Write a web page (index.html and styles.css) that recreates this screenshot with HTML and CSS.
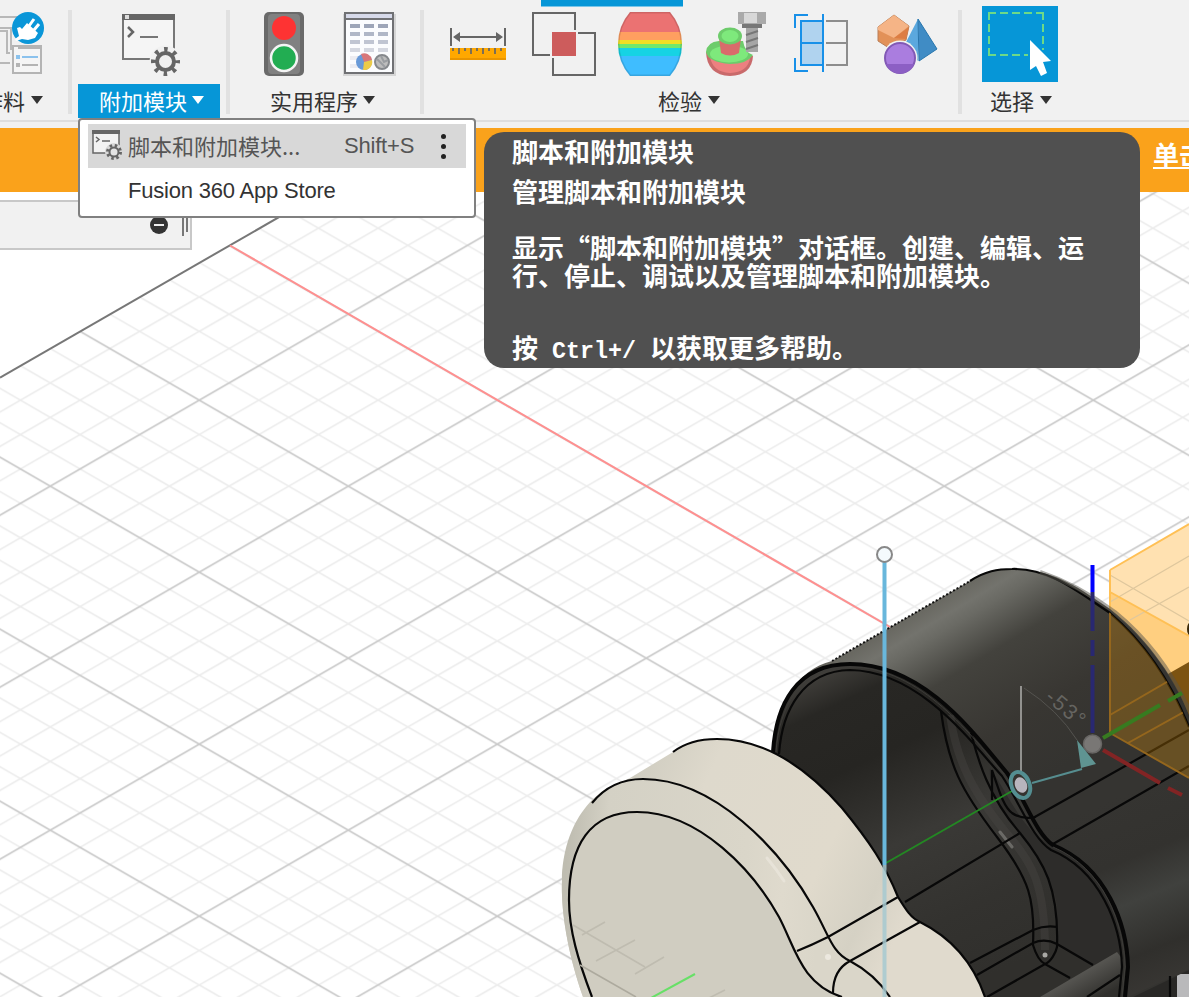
FILE: index.html
```html
<!DOCTYPE html>
<html lang="zh-CN">
<head>
<meta charset="utf-8">
<title>Fusion 360</title>
<link rel="stylesheet" href="styles.css">
</head>
<body>
<div class="app">
<svg class="canvas" width="1189" height="997" viewBox="0 0 1189 997">
  <defs>
    <pattern id="grid" width="298" height="172" patternUnits="userSpaceOnUse" x="199.3" y="400.2">
      <path class="minor" d="M0-137.6 298 34.4M0-103.2 298 68.8M0-68.8 298 103.2M0-34.4 298 137.6M0 34.4 298 206.4M0 68.8 298 240.8M0 103.2 298 275.2M0 137.6 298 309.6M0 34.4 298-137.6M0 68.8 298-103.2M0 103.2 298-68.8M0 137.6 298-34.4M0 206.4 298 34.4M0 240.8 298 68.8M0 275.2 298 103.2M0 309.6 298 137.6"/>
      <path class="major" d="M-2-1.15 300 173.15M-2 173.15 300-1.15"/>
    </pattern>
    <linearGradient id="barrel" gradientUnits="userSpaceOnUse" x1="900" y1="618" x2="1010" y2="800">
      <stop offset="0" stop-color="#66655e"/><stop offset=".1" stop-color="#73736d"/><stop offset=".16" stop-color="#6a6a64"/><stop offset=".36" stop-color="#43423d"/><stop offset=".7" stop-color="#383632"/><stop offset="1" stop-color="#343330"/>
    </linearGradient>
    <linearGradient id="lower" gradientUnits="userSpaceOnUse" x1="1110" y1="800" x2="1189" y2="990">
      <stop offset="0" stop-color="#353431"/><stop offset=".3" stop-color="#33322f"/><stop offset=".5" stop-color="#40413e"/><stop offset=".75" stop-color="#302f2c"/><stop offset="1" stop-color="#3b3936"/>
    </linearGradient>
    <linearGradient id="inside" gradientUnits="userSpaceOnUse" x1="810" y1="670" x2="960" y2="990">
      <stop offset="0" stop-color="#45433f"/><stop offset=".12" stop-color="#282724"/><stop offset=".3" stop-color="#262522"/><stop offset=".55" stop-color="#3a3936"/><stop offset=".8" stop-color="#33322f"/><stop offset="1" stop-color="#302f2c"/>
    </linearGradient>
    <linearGradient id="cream" gradientUnits="userSpaceOnUse" x1="600" y1="790" x2="900" y2="930">
      <stop offset="0" stop-color="#cbc9bd"/><stop offset=".28" stop-color="#ded9cc"/><stop offset=".7" stop-color="#e0dacc"/><stop offset=".88" stop-color="#d5d1c4"/><stop offset="1" stop-color="#e0dacd"/>
    </linearGradient>
    <linearGradient id="bevel" gradientUnits="userSpaceOnUse" x1="565" y1="880" x2="820" y2="900">
      <stop offset="0" stop-color="#bfbdb1"/><stop offset=".15" stop-color="#d4d1c5"/><stop offset=".7" stop-color="#dad6c9"/><stop offset=".85" stop-color="#dfdacd"/><stop offset="1" stop-color="#dad6c9"/>
    </linearGradient>
    <linearGradient id="shine" gradientUnits="userSpaceOnUse" x1="1075" y1="972" x2="1092" y2="1002">
      <stop offset="0" stop-color="#5b5a56"/><stop offset="1" stop-color="#302f2c"/>
    </linearGradient>
    <clipPath id="body"><path d="M1012 569C1047 566 1074 589 1110 613 1145 643 1171 682 1189 727V790H1000Z"/></clipPath>
  </defs>

  <!-- construction plane -->
  <path fill="url(#grid)" d="M0 377.600 340 182H1189V997H0Z"/>
  <path class="edge" d="M0 377.600 340 182"/>
  <path class="xaxis" d="M230 245.500 890 627"/>

  <!-- selected component -->
  <path fill="#ffe1b1" d="M1110 570 1189 524V770L1110 730Z"/>
  <path fill="#ffcf80" d="M1110 592 1189 636V700H1110Z"/>
  <path class="grid-over" d="M1110 575 1189 621M1110 602 1189 556M1130 620 1189 587"/>
  <path class="orange-line" d="M1110 570 1189 524M1110 570V620M1110 592 1189 636"/>
  <path fill="#7c5312" d="M1168 674 1189 662V720H1178Z"/>
  <ellipse cx="1191" cy="629" rx="4" ry="7" fill="#3a2808"/>

  <!-- dark body -->
  <path fill="#292826" d="M1100 970H1189V997H1100Z"/>
  <path fill="#b9b9bb" d="M1177 974H1189V997H1177Z"/>
  <path fill="url(#barrel)" d="M773 752C776 705 796 670 832 661L970 581C985 571 998 569 1012 569 1055 569 1080 589 1110 609 1150 640 1177 683 1189 715V970L1133 997H773Z"/>
  <path fill="url(#lower)" d="M1033 818 1189 731V969L1128 997 1128 967C1124 915 1099 863 1053 845Z"/>
  <path class="dotted" d="M832 661 970 581"/>
  <path class="ink" d="M970 581C985 571 998 569 1012 569 1050 568 1078 592 1110 613 1145 643 1171 682 1189 727"/>
  <path class="soft-rim" d="M1040 572C1070 582 1092 595 1115 612 1152 642 1176 680 1190 712"/>
  <path fill="url(#inside)" d="M773 752C776 705 796 664 850 664 925 664 975 735 1007 773 1025 799 1036 834 1053 845 1107 867 1127 925 1128 967L1125 997H773Z"/>
  <path fill="#2d2c2a" d="M990 768C1010 797 1025 836 1053 845 1100 865 1120 920 1122 950L1092 966 1057 945V905C1053 880 1038 855 1020 833 1000 810 988 790 990 768Z"/>
  <path fill="url(#shine)" d="M1040 997 1117 952 1123 960V997Z"/>
  <path class="channel" d="M950 715C957 764 975 795 1008 835 1032 862 1045 885 1045 950"/>
  <path class="gleam" d="M1000 832 1012 847"/>
  <circle cx="1045" cy="955" r="2.500" fill="#aaa9a5"/>
  <path class="ink" d="M941 711C948 765 961 790 997 837 1030 880 1035 900 1033 945 1036 955 1041 962 1045 964 1051 962 1056 952 1057 947 1059 888 1044 862 1020 833 985 793 976 751 971 733M992 800V770C999 790 1003 806 1012 813Q1022 820 1036 817M905 902 1020 833M970 963 1033 930Q1045 925 1057 927M977 975 1033 943Q1045 938 1057 944L1093 965M987 997 1045 964 1070 978M1087 997 1120 975M1033 818 1189 730M1053 844 1189 766"/>
  <path class="rim" d="M773 752C776 705 796 664 850 664 925 664 975 735 1007 773 1025 799 1036 834 1053 845 1107 867 1127 925 1128 967L1125 997"/>
  <path class="ink" d="M779 754C782 710 803 671 850 670 920 671 971 742 1002 776 1020 803 1032 838 1051 850 1100 870 1121 925 1122 967L1119 997"/>
  <path class="rim-light" d="M776 752C779 708 799 667 850 667 922 667 973 738 1004 774M1053 847C1104 868 1124 925 1125 967L1122 997"/>
  <path class="ink" d="M1170 976V997"/>

  <!-- selection overlay on the dark body -->
  <g clip-path="url(#body)">
    <path fill="#ffa500" fill-opacity=".25" d="M1110 560H1189V778L1110 733Z"/>
    <path class="orange-dim" d="M1110 715 1189 669M1128 743 1189 709M1110 733 1189 778"/>
    <path class="orange-dim" d="M1110 590V733"/>
  </g>

  <!-- cream body -->
  <path fill="url(#cream)" d="M583 997C565 945 561 905 562 880 565 830 585 798 630 778L673 752C686 742 701 739 717 739 775 739 820 783 842 808 870 842 885 865 898 897 906 910 911 918 920 922 952 938 973 962 985 997Z"/>
  <path fill="url(#bevel)" d="M583 997C565 945 561 905 562 880 563 825 594 779 643 779 714 779 780 849 813 907 829 935 832 953 850 961 867 970 880 982 890 997Z"/>
  <path fill="#d0cdc1" d="M592 997C578 960 569 930 569 900 569 845 590 812 637 812 700 812 754 872 779 917 795 947 801 984 842 997Z"/>
  <path class="highlight" d="M767 858Q777 870 784 881"/>
  <circle cx="828" cy="957" r="3" fill="#ece8df"/>
  <path class="ink" d="M673 752C686 742 701 739 717 739 775 739 820 783 842 808 870 842 885 865 898 897 906 910 911 918 920 922 952 938 973 962 985 997M592 803C605 787 622 779 643 779 714 779 780 849 813 907 829 935 832 953 850 961 867 970 880 982 890 997M592 997C578 960 569 930 569 900 569 845 590 812 637 812 700 812 754 872 779 917 795 947 801 984 842 997M797 951Q812 945 828 937L898 897M920 922 850 961Q833 970 833 993"/>
  <path class="faint" d="M582 935 605 922M596 961 635 940M635 974 664 957M705 1000 725 990M573 925 645 967"/>
  <path class="faint strong" d="M580 965 636 997"/>
  <path class="green-tip" d="M651 998 695 974"/>

  <!-- manipulators -->
  <path class="green-axis" d="M886 863 1012 791"/>
  <path class="blue-line" d="M884.500 562V865"/>
  <path class="blue-faint" d="M884.500 865V997"/>
  <circle cx="884.500" cy="554.500" r="7.500" fill="#f4fafd" stroke="#888" stroke-width="2"/>
  <path class="z-top" d="M1092.500 565V592"/>
  <path class="z-low" d="M1092.500 592V631M1092.500 640V656M1092.500 665V733"/>
  <path class="y-low" d="M1103 738 1160 705M1168 701 1182 693"/>
  <path class="x-low" d="M1103 750 1160 783M1168 788 1182 795"/>
  <circle cx="1092.500" cy="744" r="9" fill="#797775" stroke="#686664" stroke-width="1.500"/>
  <path d="M1021 686V771" stroke="#b0b0ae" stroke-width="1.500"/>
  <path d="M1024 688Q1058 710 1077 740" fill="none" stroke="#54534f"/>
  <path d="M1032 783 1082 769" stroke="#568d8f" stroke-width="2"/>
  <path fill="#5f9492" d="M1077 740 1096 764 1081 768Z"/>
  <ellipse cx="1020.500" cy="785" rx="9" ry="13.500" transform="rotate(-22 1020.500 785)" fill="#35332f" stroke="#548e91" stroke-width="4"/>
  <ellipse cx="1021" cy="785" rx="6" ry="8" transform="rotate(-22 1021 785)" fill="#b8b5bd"/>
  <text class="angle" transform="translate(1044 699) rotate(40)">-53°</text>
</svg>

<header class="toolbar">
  <section class="group g-make">
    <div class="icons">
      <svg width="64" height="64" viewBox="0 12 64 64">
        <path fill="none" stroke="#b8b8b8" stroke-width="2" d="M0 17H18M0 28H11V50M0 31H7V53H10M0 63H10"/>
        <path fill="#f5f5f5" stroke="#b4b4b4" stroke-width="2" d="M13 46H41V73H13Z"/><path stroke="#b4b4b4" stroke-width="4" d="M18 47H41"/>
        <path stroke="#8bc2ed" stroke-width="2" d="M22 57H38"/><path stroke="#b4b4b4" stroke-width="2" d="M22 65H38"/><path fill="#8bc2ed" d="M16 55h4v4h-4z"/><path fill="#b4b4b4" d="M16 63h4v4h-4z"/>
        <circle cx="28" cy="28" r="16" fill="#0a96d8"/>
        <path fill="#fff" d="M17 28 20 27 22 29 27 23 38 33 35 38 28 40 22 39 16 41 15 39 19 36Z"/>
        <path fill="none" stroke="#fff" stroke-width="3" d="M29 26 34 19M34 30 39 24"/>
      </svg>
    </div>
    <div class="label"><span>作料</span><i class="tri"></i></div>
  </section>
  <section class="group g-addins">
    <div class="icons">
      <svg width="64" height="64" viewBox="118 12 64 64">
        <path fill="#f5f5f5" stroke="#777" stroke-width="2" d="M123 15H174V59H123Z"/>
        <path fill="#666" d="M122 14H175V20H122Z"/><path fill="#ddd" d="M125 15h4v4h-4z"/>
        <path fill="none" stroke="#666" stroke-width="2.500" d="M128 27 133 32 128 37"/><path stroke="#777" stroke-width="2" d="M140 37H158"/>
        <circle cx="165.500" cy="61.500" r="16" fill="#f1f1f1"/>
        <circle cx="165.500" cy="61.500" r="12" fill="none" stroke="#666" stroke-width="5" stroke-dasharray="3.500 5.925" stroke-dashoffset="1.750"/>
        <circle cx="165.500" cy="61.500" r="8.500" fill="#f1f1f1" stroke="#666" stroke-width="4"/>
      </svg>
    </div>
    <div class="label active"><span>附加模块</span><i class="tri"></i></div>
  </section>
  <section class="group g-utils">
    <div class="icons">
      <svg width="64" height="64" viewBox="252 12 64 64">
        <rect x="264" y="12" width="40" height="64" rx="5" fill="#6a6a6a"/><rect x="268" y="14" width="32" height="60" rx="4" fill="#818181"/>
        <circle cx="284" cy="28" r="12" fill="#fe3333"/><circle cx="284" cy="58" r="13" fill="#22ad52" stroke="#f4f4f4" stroke-width="2.500"/>
      </svg>
      <svg width="64" height="64" viewBox="338 12 64 64">
        <path fill="#d5d5d5" d="M343 14H396V76H343Z"/><path fill="#fbfcfe" stroke="#707174" stroke-width="2" d="M345 13H393V73H345Z"/>
        <path fill="#d7daea" d="M346 14H392V18H346Z"/><path stroke="#707174" stroke-width="2" d="M345 19H393"/>
        <g stroke-width="4" stroke-dasharray="10 4"><path stroke="#9da5b8" d="M350 26H388"/><path stroke="#b0b7c7" d="M350 34H388"/><path stroke="#c0c5d2" d="M350 42H388"/><path stroke="#d4d7e0" d="M350 50H388"/><path stroke="#ececf1" d="M350 58H360M350 66H360"/></g>
        <circle cx="364" cy="62" r="8" fill="#699ad8"/><path fill="#d8777a" d="M364 62 361 54A8 8 0 0 1 372 60Z"/><path fill="#eccb48" d="M364 62 372 60A8 8 0 0 1 363 70Z"/>
        <circle cx="382" cy="62" r="7" fill="#bdbdbd" stroke="#85888c" stroke-width="2"/><path fill="none" stroke="#9a9da1" stroke-width="2" d="M377 59 385 67M381 56 384 62 388 60"/>
      </svg>
    </div>
    <div class="label"><span>实用程序</span><i class="tri"></i></div>
  </section>
  <section class="group g-inspect">
    <div class="icons">
      <svg width="64" height="64" viewBox="446 12 64 64">
        <path fill="none" stroke="#666" stroke-width="2" d="M451 28V46M505 28V46M456 37H500"/><path fill="#666" d="M453 37 460 32V42ZM503 37 496 32V42Z"/>
        <path fill="#ffa800" d="M450 48H506V60H450Z"/><path fill="#e99500" d="M450 58H506V60H450Z"/><path stroke="#666" stroke-width="1.700" d="M453 48V51M459 48V54M465 48V51M471 48V54M477 48V51M483 48V54M489 48V51M495 48V54M501 48V51"/>
      </svg>
      <svg width="64" height="64" viewBox="532 12 64 64">
        <path fill="none" stroke="#666" stroke-width="2" d="M575 30V13H533V55H550M578 33H595V75H553V58"/><path fill="#cd5c5c" d="M552 32H576V56H552Z"/>
      </svg>
      <svg width="64" height="64" viewBox="618 12 64 64">
        <defs><clipPath id="zebra"><path d="M630 12H670Q682 26 682 44T670 76H630Q618 62 618 44T630 12Z"/></clipPath></defs>
        <g clip-path="url(#zebra)"><path fill="#eb7272" d="M618 12h64v20h-64z"/><path fill="#ff9f60" d="M618 32h64v8h-64z"/><path fill="#f0df24" d="M618 40h64v4h-64z"/><path fill="#70e86d" d="M618 44h64v4h-64z"/><path fill="#16d3e4" d="M618 48h64v8h-64z"/><path fill="#3fbdff" d="M618 56h64v20h-64z"/><path fill="none" stroke="#000" stroke-opacity=".12" stroke-width="3" d="M630 12H670Q682 26 682 44T670 76H630Q618 62 618 44T630 12Z"/></g>
      </svg>
      <svg width="64" height="64" viewBox="704 12 64 64">
        <path fill="#c96a6b" d="M706 52Q707 75 730 76 752 75 753 56Z"/><path fill="#ed8080" d="M710 56Q712 72 730 73 748 72 750 58Z"/>
        <path fill="#6dcc6b" d="M706 52Q707 42 719 41H743Q745 53 753 55 747 64 730 64 708 62 706 52Z"/><ellipse cx="729" cy="54" rx="19" ry="8.500" fill="#7ee97c"/>
        <path fill="#d96b6b" d="M719 38H741L739 53Q730 58 721 53Z"/><ellipse cx="730" cy="36" rx="12" ry="8.500" fill="#6dcc6b"/><ellipse cx="730" cy="36" rx="8.500" ry="6" fill="#7ee97c"/>
        <path fill="#aaa" d="M738 12H766V24H738Z"/><path fill="#d8d8d8" d="M744 13H757V23H744Z"/><path fill="#777" d="M742 24H762V28H742Z"/><path fill="#a6a6a6" d="M746 28H758V52H746Z"/><path stroke="#777" stroke-width="2" d="M746 35 758 31M746 42 758 38M746 49 758 45"/>
      </svg>
      <svg width="64" height="64" viewBox="790 12 64 64">
        <path fill="#b0d3ef" d="M801 21H822V65H801Z"/><path fill="none" stroke="#1890e8" stroke-width="2" d="M795 28V15H808M795 58V71H808M823 14V72M823 21H801V65H823M801 43H823"/><path fill="none" stroke="#8d8d8d" stroke-width="2" d="M826 21H847V65H826M826 43H847"/>
      </svg>
      <svg width="64" height="64" viewBox="876 12 64 64">
        <path fill="#e29158" stroke="#b97f58" d="M894 15 909 26 906 40 889 48 878 41V27Z"/><path fill="#f5b486" d="M894 15 909 26 894 38 878 30V27Z"/><path fill="#dd7d43" d="M909 27 894 38 906 39Z"/>
        <path fill="#5ba8de" d="M918 19V61L904 46Z"/><path fill="#408cc5" stroke="#2876ad" d="M918 19 937 49 919 61Z"/>
        <circle cx="900" cy="58" r="17.500" fill="#f1f1f1"/><circle cx="900" cy="58" r="15" fill="#aa7ddf" stroke="#8259b5" stroke-width="2"/><path fill="#8c5fc4" d="M886 64H914A15 15 0 0 1 886 64Z"/>
      </svg>
    </div>
    <div class="label"><span>检验</span><i class="tri"></i></div>
  </section>
  <section class="group g-select">
    <div class="icons">
      <svg class="pick" width="76" height="76" viewBox="982 6 76 76">
        <path fill="#0696d7" d="M982 6H1058V82H982Z"/>
        <path fill="none" stroke="#6dd987" stroke-width="2" stroke-dasharray="8 4" d="M1000 13H1037M1043 24V50M989 24V50M1000 55H1028"/>
        <path fill="none" stroke="#6dd987" stroke-width="2" d="M996 13H989V20M1037 13H1043V20M989 49V55H996"/>
        <path fill="#fff" d="M1030 40 1051 61 1043 62 1047 73 1041 76 1036 66 1030 70Z"/>
      </svg>
    </div>
    <div class="label"><span>选择</span><i class="tri"></i></div>
  </section>
  <div class="tab-mark"></div>
</header>

<div class="banner"><a class="link">单击</a></div>
<div class="browser"><svg width="40" height="26" viewBox="148 215 40 26"><circle cx="159" cy="225" r="9" fill="#333"/><path stroke="#eee" stroke-width="2" d="M154 225H164"/><path stroke="#777" stroke-width="2" d="M183 215V236M187 215V232"/></svg></div>

<nav class="menu">
  <div class="item hot">
    <svg width="32" height="32" viewBox="90 130 32 32">
      <path fill="#f2f2f2" stroke="#666" stroke-width="1.500" d="M93 132H119V153H93Z"/><path fill="#666" d="M92 130H120V134H92Z"/><path fill="none" stroke="#666" stroke-width="1.500" d="M96 137 99 139.500 96 142M102 141H110"/>
      <circle cx="114" cy="152" r="9" fill="#d8d8d8"/><circle cx="114" cy="152" r="6.500" fill="none" stroke="#666" stroke-width="3" stroke-dasharray="2.500 2.605"/><circle cx="114" cy="152" r="4.500" fill="#e4e4e4" stroke="#666" stroke-width="2"/>
    </svg>
    <span class="name">脚本和附加模块...</span><span class="key">Shift+S</span><span class="dots"><i></i><i></i><i></i></span>
  </div>
  <div class="item"><span class="store">Fusion 360 App Store</span></div>
</nav>

<aside class="tooltip">
  <p>脚本和附加模块</p>
  <p class="sub">管理脚本和附加模块</p>
  <p class="text">显示“脚本和附加模块”对话框。创建、编辑、运<br>行、停止、调试以及管理脚本和附加模块。</p>
  <p class="help">按<span class="mono"> Ctrl+/ </span>以获取更多帮助。</p>
</aside>
</div>
</body>
</html>
```
FILE: styles.css
```css
* { box-sizing: border-box; }
body { margin: 0; background: #fff; font-family: "Liberation Sans", "Noto Sans CJK SC", sans-serif; color: #333; }
.app { position: relative; width: 1189px; height: 997px; overflow: hidden; }
.canvas { position: absolute; left: 0; top: 0; }

.minor { fill: none; stroke: #ececec; stroke-width: 1.6; }
.major { fill: none; stroke: #cacaca; stroke-width: 1.7; }
.edge { stroke: #777; stroke-width: 2; }
.xaxis { stroke: #ff8f8f; stroke-width: 2; }
.grid-over { fill: none; stroke: #dfc79d; stroke-width: 1.3; }
.orange-line { fill: none; stroke: #ffc055; stroke-width: 2; }
.orange-dim { fill: none; stroke: #94661d; stroke-width: 2; }
.ink { fill: none; stroke: #080808; stroke-width: 2.2; }
.dotted { fill: none; stroke: #111; stroke-width: 2; stroke-dasharray: 2 2; }
.soft-rim { fill: none; stroke: #55534b; stroke-width: 4; opacity: .5; }
.rim { fill: none; stroke: #070707; stroke-width: 4; }
.rim-light { fill: none; stroke: #3d3c39; stroke-width: 1; }
.channel { fill: none; stroke: #484744; stroke-width: 8; opacity: .4; }
.gleam { stroke: #8d8c88; stroke-width: 3; opacity: .6; stroke-linecap: round; }
.highlight { fill: none; stroke: #ebe7dd; stroke-width: 3; stroke-linecap: round; opacity: .7; }
.faint { fill: none; stroke: #bfbcb0; stroke-width: 1.6; }
.strong { stroke: #adaa9e; }
.green-tip { stroke: #67e067; stroke-width: 2; }
.green-axis { stroke: #238823; stroke-width: 2; }
.blue-line { stroke: #69b7dc; stroke-width: 4; }
.blue-faint { stroke: #a7cad1; stroke-width: 4; opacity: .85; }
.z-top { stroke: #00f; stroke-width: 4; }
.z-low { stroke: #292871; stroke-width: 4; }
.y-low { fill: none; stroke: #377b20; stroke-width: 4; }
.x-low { fill: none; stroke: #822424; stroke-width: 4; }
.angle { font: 21px "Liberation Sans", sans-serif; letter-spacing: 2px; fill: #666561; }

.toolbar { position: relative; display: flex; height: 128px; background: #f1f1f1; border-bottom: 6px solid #f1f1f1; box-shadow: inset 0 -2px #dedede; }
.group { position: relative; flex: none; height: 118px; }
.group:not(.g-select)::after { content: ""; position: absolute; right: 0; top: 10px; width: 4px; height: 104px; background: #e1e1e1; }
.g-make { width: 72px; }
.g-addins { width: 158px; }
.g-utils { width: 194px; }
.g-inspect { width: 538px; }
.g-select { width: 227px; }
.icons { display: flex; gap: 22px; height: 84px; padding-top: 12px; }
.icons svg { flex: none; }
.g-addins .icons { padding-left: 46px; }
.g-utils .icons, .g-inspect .icons { padding-left: 22px; }
.g-select .icons { padding: 6px 0 0 20px; }
.label { display: flex; align-items: center; gap: 6px; height: 34px; font: 22px/32px "Noto Sans CJK SC", sans-serif; white-space: nowrap; }
.label span { display: block; height: 34px; }
.tri { width: 12px; height: 8px; margin-top: -2px; background: currentColor; clip-path: polygon(0 0, 100% 0, 50% 100%); }
.g-make .label { margin-left: -19px; }
.active { margin-left: 6px; width: 142px; padding-left: 21px; gap: 5px; background: #0696d7; color: #fff; }
.g-utils .label { padding-left: 40px; gap: 5px; }
.g-inspect .label { padding-left: 234px; }
.g-select .label { padding-left: 28px; }
.tab-mark { position: absolute; left: 541px; top: 0; width: 142px; height: 7px; background: #0696d7; border-bottom: 1px solid #79c5e8; }

.banner { position: relative; display: flex; justify-content: flex-end; height: 64px; background: #faa21b; overflow: hidden; }
.link { flex: none; width: 36px; padding-top: 12px; color: #fff; font: bold 26px/28px "Noto Sans CJK SC", sans-serif; text-decoration: underline; text-decoration-thickness: 2px; text-underline-offset: 2px; white-space: nowrap; }
.browser { position: relative; display: flex; justify-content: flex-end; width: 192px; height: 50px; margin-top: 8px; padding: 15px 2px 0 0; background: #f1f1f1; border: 2px solid #c8c8c8; border-left: 0; }
.browser svg { margin-top: -2px; }

.menu { position: absolute; left: 78px; top: 118px; width: 398px; height: 100px; padding: 4px 8px; background: #fff; border: 2px solid #808080; border-radius: 4px; font-size: 22px; }
.item { display: flex; align-items: center; height: 44px; white-space: nowrap; }
.hot { background: #d8d8d8; color: #555; }
.item svg { flex: none; margin-left: 2px; }
.name { width: 216px; margin: -3px 0 0 6px; font-family: "Noto Sans CJK SC", sans-serif; line-height: 44px; }
.key { width: 97px; letter-spacing: -.2px; }
.dots { display: grid; gap: 5px; }
.dots i { width: 5px; height: 5px; border-radius: 50%; background: #222; }
.store { margin: 1px 0 0 40px; letter-spacing: -.2px; }

.tooltip { position: absolute; left: 484px; top: 132px; width: 656px; height: 236px; padding: 5px 28px; border-radius: 20px; background: #505050; color: #fff; font: bold 26px/28px "Noto Sans CJK SC", sans-serif; white-space: nowrap; }
.tooltip p { margin: 0; }
.tooltip .sub { margin-top: 12px; }
.tooltip .text { margin-top: 28px; }
.tooltip .help { margin-top: 44px; }
.mono { font-family: "Liberation Mono", monospace; font-size: 23.33px; white-space: pre; }
```
